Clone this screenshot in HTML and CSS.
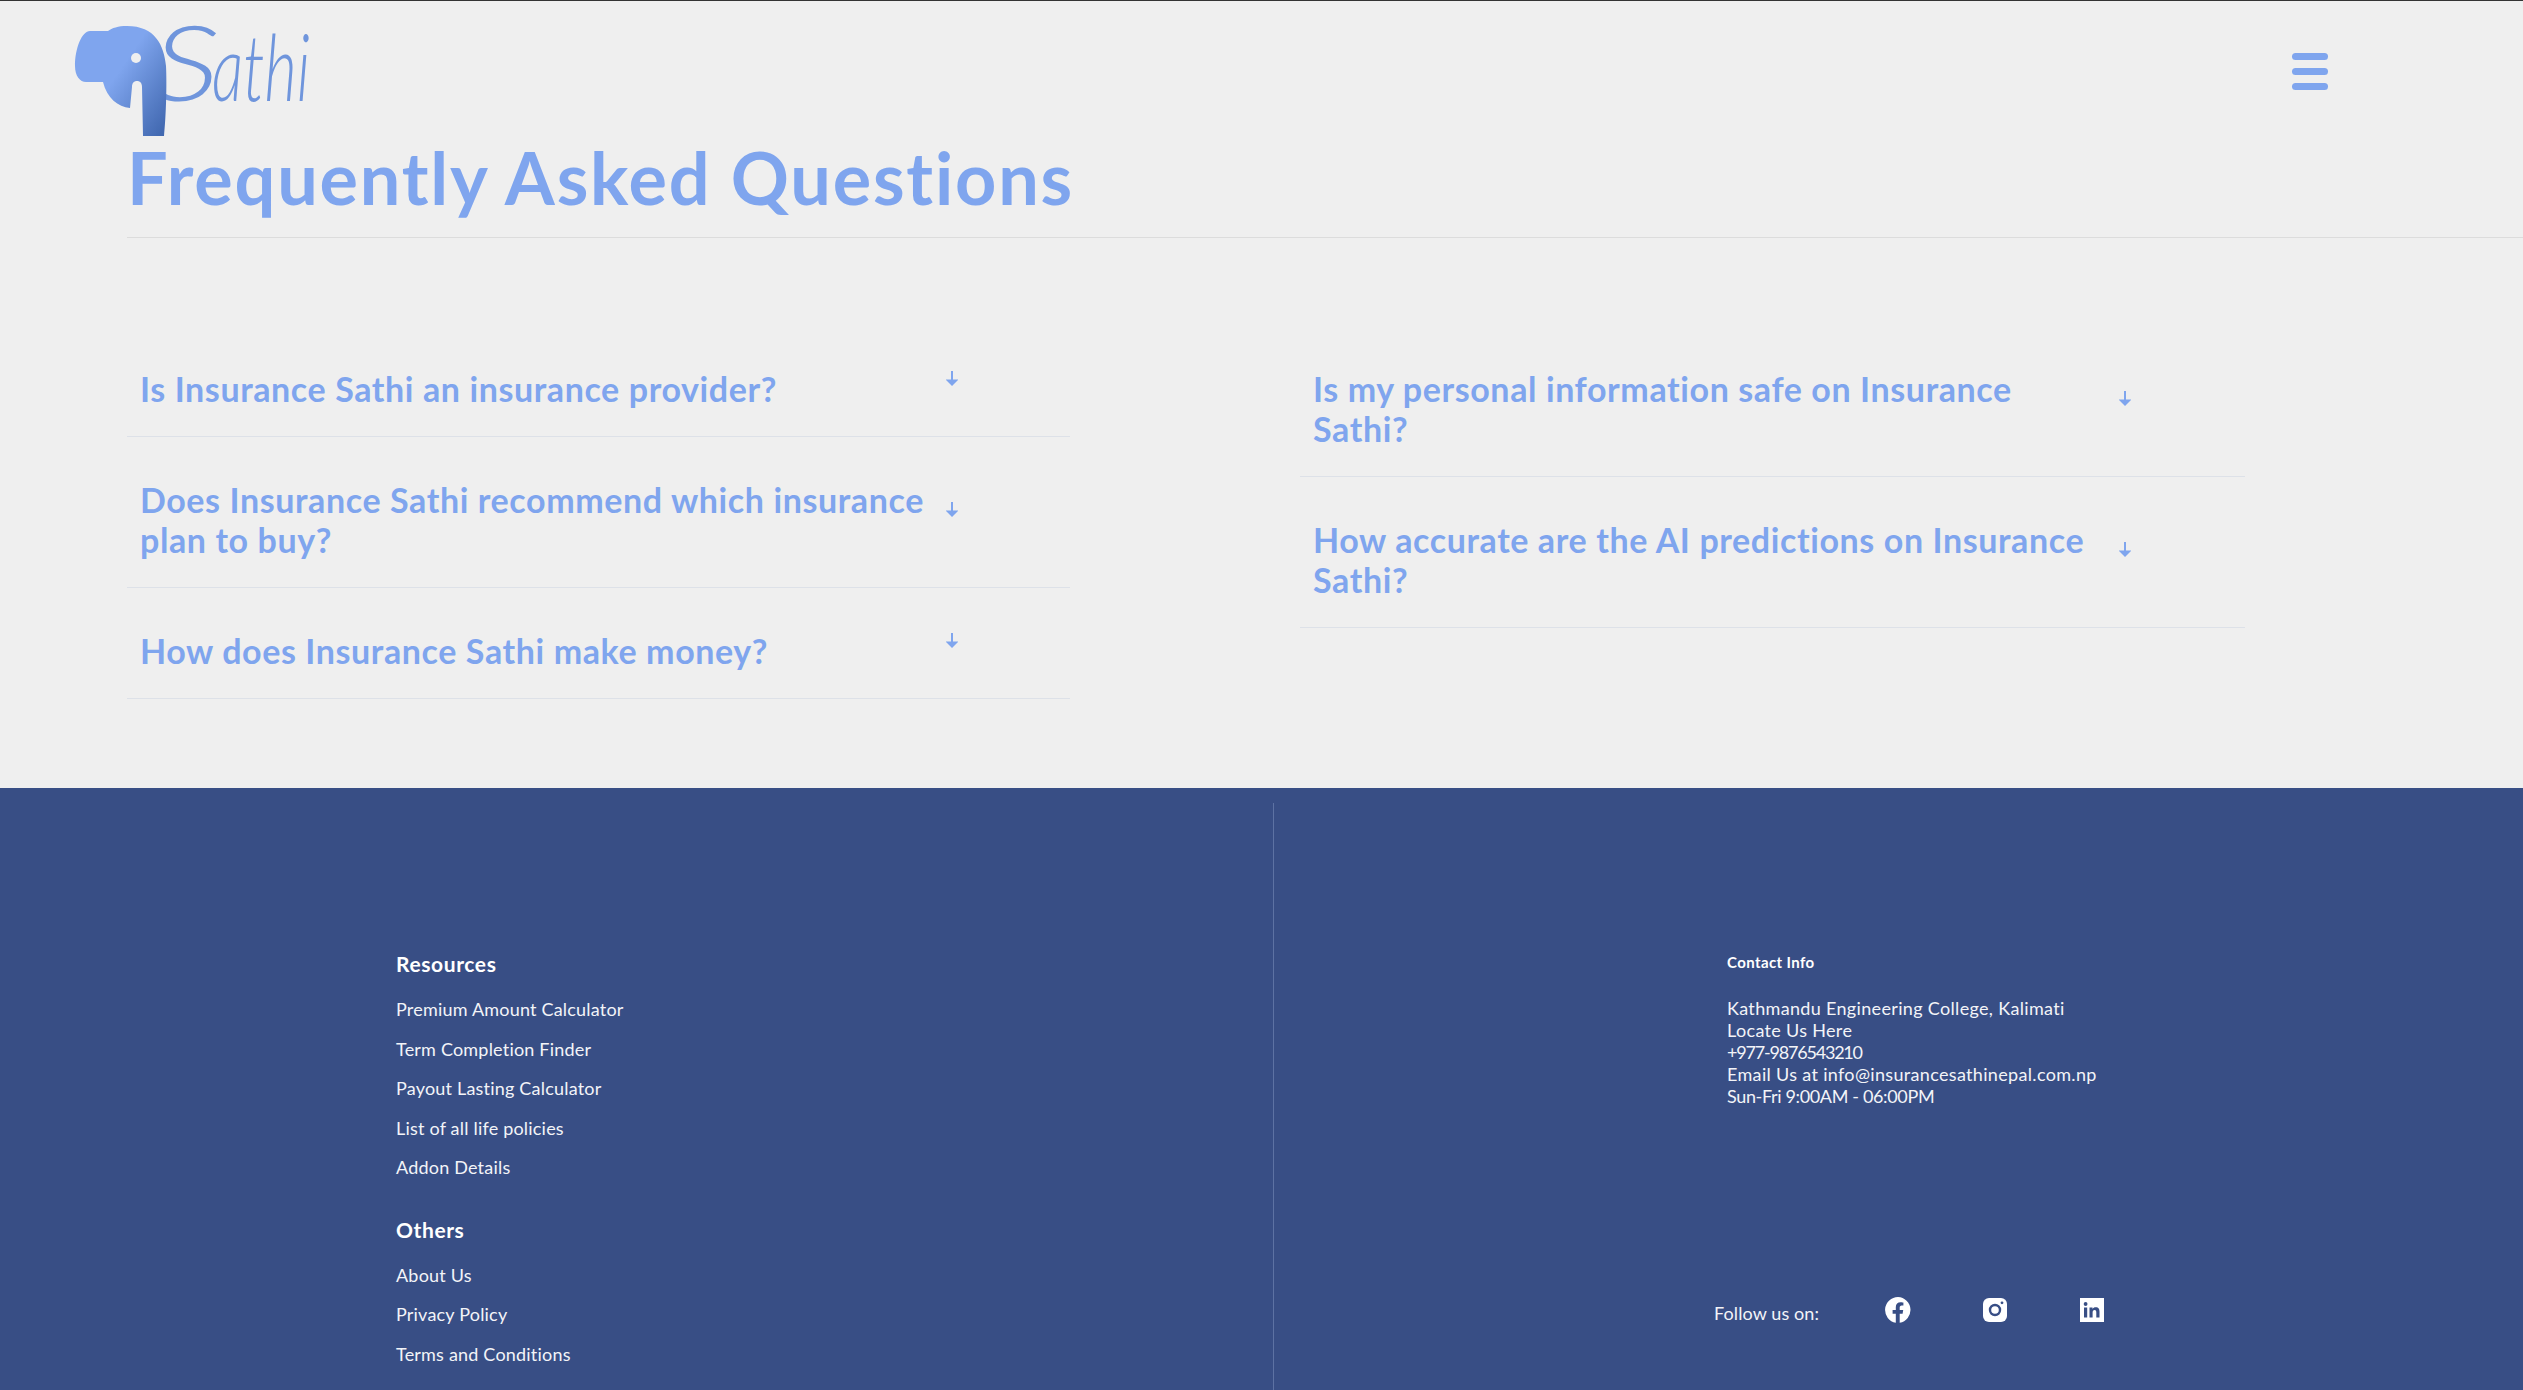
FILE: index.html
```html
<!DOCTYPE html>
<html lang="en">
<head>
    <meta charset="UTF-8">
    <title>Frequently Asked Questions</title>
    <link rel="stylesheet" href="styles.css">
</head>
<body>
    <header class="topbar">
        <svg class="logo" viewBox="35 20 240 118" width="240" height="118">
            <defs>
                <linearGradient id="elephantFill" x1="0.45" y1="0.45" x2="1" y2="0.9">
                    <stop offset="0" stop-color="#7fa5ee"/>
                    <stop offset="1" stop-color="#4269b1"/>
                </linearGradient>
            </defs>
            <text class="logo-s" x="112" y="101" textLength="68" lengthAdjust="spacingAndGlyphs">S</text>
            <text class="logo-word" x="172" y="101" textLength="98" lengthAdjust="spacingAndGlyphs">athi</text>
            <path fill="url(#elephantFill)" d="M68 31 L50 31 C42 31 35 48 35 66 C35 76 40 82 46 82 L63 82 C67 98 78 107 90 108 L92 87 C92 83 94 81 97 81 C100 81 102 83 102 87 L103 136 L124 136 C126 118 127 85 126 66 C124 45 115 26 87 26 C78 26 72 28 68 31 Z"/>
            <circle cx="96" cy="58" r="5" fill="#efefef"/>
        </svg>
        <div class="menu-btn"><span></span><span></span><span></span></div>
    </header>

    <main class="faq">
        <h1>Frequently Asked Questions</h1>
        <div class="faq-grid">
            <div class="faq-col">
                <div class="faq-row">
                    <h3>Is Insurance Sathi an insurance provider?</h3>
                    <svg class="arrow" viewBox="0 0 12 16" width="12" height="16"><path d="M6 1V14M2 10.5L6 14.5L10 10.5Z"/></svg>
                </div>
                <div class="faq-row">
                    <h3>Does Insurance Sathi recommend which insurance plan to buy?</h3>
                    <svg class="arrow" viewBox="0 0 12 16" width="12" height="16"><path d="M6 1V14M2 10.5L6 14.5L10 10.5Z"/></svg>
                </div>
                <div class="faq-row">
                    <h3>How does Insurance Sathi make money?</h3>
                    <svg class="arrow" viewBox="0 0 12 16" width="12" height="16"><path d="M6 1V14M2 10.5L6 14.5L10 10.5Z"/></svg>
                </div>
            </div>
            <div class="faq-col">
                <div class="faq-row">
                    <h3>Is my personal information safe on Insurance Sathi?</h3>
                    <svg class="arrow" viewBox="0 0 12 16" width="12" height="16"><path d="M6 1V14M2 10.5L6 14.5L10 10.5Z"/></svg>
                </div>
                <div class="faq-row">
                    <h3>How accurate are the AI predictions on Insurance Sathi?</h3>
                    <svg class="arrow" viewBox="0 0 12 16" width="12" height="16"><path d="M6 1V14M2 10.5L6 14.5L10 10.5Z"/></svg>
                </div>
            </div>
        </div>
    </main>

    <footer class="footer">
        <div class="footer-left">
            <h4>Resources</h4>
            <ul>
                <li>Premium Amount Calculator</li>
                <li>Term Completion Finder</li>
                <li>Payout Lasting Calculator</li>
                <li>List of all life policies</li>
                <li>Addon Details</li>
            </ul>
            <h4 class="others">Others</h4>
            <ul>
                <li>About Us</li>
                <li>Privacy Policy</li>
                <li>Terms and Conditions</li>
            </ul>
        </div>
        <div class="footer-right">
            <div class="contact">
                <h5>Contact Info</h5>
                <p>Kathmandu Engineering College, Kalimati</p>
                <p>Locate Us Here</p>
                <p class="phone">+977-9876543210</p>
                <p>Email Us at info@insurancesathinepal.com.np</p>
                <p class="hours">Sun-Fri 9:00AM - 06:00PM</p>
            </div>
            <div class="social">
                <span class="follow">Follow us on:</span>
                <svg class="fb" viewBox="0 0 26 26" width="26" height="26">
                    <path fill="#fff" d="M13 0a13 13 0 0 0-2.2 25.8V16.7H7.6V13h3.2v-2.8c0-3.2 1.9-5 4.8-5 1.4 0 2.8.3 2.8.3v3.1h-1.6c-1.6 0-2.1 1-2.1 2V13h3.5l-.6 3.7h-2.9v9.1A13 13 0 0 0 13 0Z"/>
                </svg>
                <svg class="ig" viewBox="0 0 24 24" width="24" height="24">
                    <rect width="24" height="24" rx="6" fill="#fff"/>
                    <circle cx="12" cy="12" r="5" fill="none" stroke="#384e85" stroke-width="2.4"/>
                    <circle cx="19" cy="4.8" r="1.4" fill="#384e85"/>
                </svg>
                <svg class="in" viewBox="0 0 24 24" width="24" height="24">
                    <rect width="24" height="24" fill="#fff"/>
                    <rect x="4" y="9.5" width="3.2" height="10" fill="#384e85"/>
                    <circle cx="5.6" cy="6" r="1.9" fill="#384e85"/>
                    <path fill="#384e85" d="M9.5 9.5h3v1.4c.6-1 1.7-1.7 3.2-1.7 3 0 3.8 2 3.8 4.6v5.7h-3.2v-5c0-1.3-.3-2.5-1.7-2.5s-2 1.1-2 2.5v5H9.5Z"/>
                </svg>
            </div>
        </div>
    </footer>
</body>
</html>
```

FILE: styles.css
```css
* {
    box-sizing: border-box;
}

html, body {
    margin: 0;
    height: 100%;
}

body {
    display: flex;
    flex-direction: column;
    height: 100vh;
    overflow: hidden;
    background-color: #efefef;
    border-top: 1px solid #333;
    font-family: Lato, "Noto Sans", sans-serif;
}

/* header */
.topbar {
    display: flex;
    justify-content: space-between;
    align-items: flex-start;
    height: 137px;
    padding: 19px 195px 0 75px;
}

.logo {
    overflow: visible;
}

.logo-s, .logo-word {
    font-family: Lato, sans-serif;
    font-style: italic;
    font-weight: 300;
    fill: #6f95dc;
}

.logo-s {
    font-size: 104px;
}

.logo-word {
    font-size: 92px;
}

.menu-btn {
    display: flex;
    flex-direction: column;
    gap: 8px;
    margin-top: 33px;
}

.menu-btn span {
    display: block;
    width: 36px;
    height: 7px;
    border-radius: 4px;
    background-color: #7fa5ee;
}

/* faq */
.faq {
    flex: none;
    height: 650px;
    padding-left: 127px;
}

.faq h1 {
    margin: 0;
    height: 100px;
    line-height: 78px;
    font-size: 72px;
    font-weight: 700;
    letter-spacing: 1.8px;
    color: #7fa5ee;
    border-bottom: 1px solid #dcdcdc;
}

.faq-grid {
    display: grid;
    grid-template-columns: 943px 945px;
    column-gap: 230px;
    margin-top: 88px;
}

.faq-row {
    display: flex;
    align-items: center;
    padding: 43px 0 27px 13px;
    border-bottom: 1px solid #dde1e8;
}

.faq-row h3 {
    flex: none;
    width: 795px;
    margin: 0;
    font-size: 34px;
    line-height: 40px;
    font-weight: 700;
    letter-spacing: 0.6px;
    color: #7fa5ee;
}

.arrow {
    margin: 0 0 22px 11px;
}

.arrow path {
    fill: #7fa5ee;
    stroke: #7fa5ee;
    stroke-width: 2;
}

/* footer */
.footer {
    flex: 1;
    display: grid;
    grid-template-columns: 1274px 1fr;
    background-color: #384e85;
    color: #f3f4f8;
    padding-top: 15px;
}

.footer-left {
    padding: 147px 0 0 396px;
    border-right: 1px solid #5d72a3;
}

.footer-left h4 {
    margin: 0 0 12px;
    font-size: 21px;
    line-height: 28px;
    font-weight: 700;
    letter-spacing: 0.6px;
    color: #fff;
}

.footer-left h4.others {
    margin-top: 28px;
}

.footer-left ul {
    list-style: none;
    margin: 0;
    padding: 0;
}

.footer-left li {
    height: 39.5px;
    line-height: 39.5px;
    font-size: 18px;
    letter-spacing: 0.2px;
}

.footer-right {
    padding-top: 149px;
    padding-left: 453px;
}

.contact h5 {
    margin: 0 0 25px;
    font-size: 15px;
    line-height: 20px;
    font-weight: 700;
    letter-spacing: 0.4px;
    color: #fff;
}

.contact p {
    margin: 0;
    font-size: 18px;
    line-height: 22px;
    letter-spacing: 0.33px;
}

.contact p.phone {
    letter-spacing: -1.2px;
}

.contact p.hours {
    letter-spacing: -0.35px;
}

.social {
    display: flex;
    align-items: center;
    margin: 189px 0 0 -13px;
}

.follow {
    width: 171px;
    font-size: 18px;
    letter-spacing: 0.1px;
    margin-top: 6px;
}

.social .ig {
    margin-left: 72px;
}

.social .in {
    margin-left: 73px;
}
```
